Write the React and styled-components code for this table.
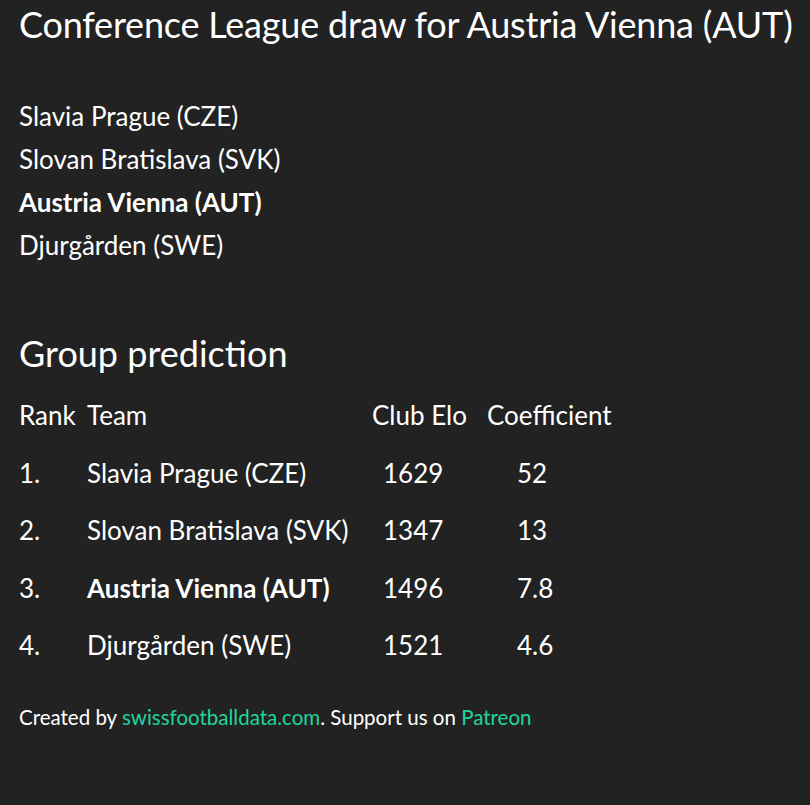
import styled, { createGlobalStyle } from 'styled-components';

const GlobalStyle = createGlobalStyle`
  html, body {
    margin: 0;
    padding: 0;
    background: #222222;
  }
  body {
    font-family: Lato, "Open Sans", sans-serif;
    color: #ffffff;
  }
`;

const Page = styled.div`
  min-height: 805px;
  padding: 2px 19px 0;
  box-sizing: border-box;
`;

const Title = styled.h1`
  margin: 0;
  font-size: 36px;
  font-weight: 400;
  line-height: 44px;
  letter-spacing: -0.2px;
  white-space: nowrap;
`;

const DrawList = styled.ul`
  list-style: none;
  margin: 49px 0 0;
  padding: 0;
`;

const DrawItem = styled.li`
  font-size: 26px;
  line-height: 43px;
  font-weight: ${props => (props.highlight ? 700 : 400)};
`;

const SubTitle = styled.h2`
  margin: 64px 0 0;
  font-size: 36px;
  font-weight: 400;
  line-height: 44px;
`;

const Table = styled.div`
  display: grid;
  grid-template-columns: 68px 285px 115px auto;
  grid-template-rows: 58px;
  grid-auto-rows: 57.5px;
  margin-top: 11px;
  font-size: 26px;
`;

const Cell = styled.div`
  display: flex;
  align-items: center;
  padding-left: ${props => props.indent || 0}px;
  font-weight: ${props => (props.highlight ? 700 : 400)};
`;

const Footer = styled.p`
  margin: 31px 0 0;
  font-size: 20.5px;
  line-height: 24px;
`;

const Link = styled.a`
  color: #1fd59d;
  text-decoration: none;
`;

const teams = [
  { name: 'Slavia Prague (CZE)', elo: 1629, coef: '52' },
  { name: 'Slovan Bratislava (SVK)', elo: 1347, coef: '13' },
  { name: 'Austria Vienna (AUT)', elo: 1496, coef: '7.8', own: true },
  { name: 'Djurgården (SWE)', elo: 1521, coef: '4.6' },
];

export default function App() {
  return (
    <>
      <GlobalStyle />
      <Page>
        <Title>Conference League draw for Austria Vienna (AUT)</Title>
        <DrawList>
          {teams.map(t => (
            <DrawItem key={t.name} highlight={t.own}>{t.name}</DrawItem>
          ))}
        </DrawList>
        <SubTitle>Group prediction</SubTitle>
        <Table>
          <Cell>Rank</Cell>
          <Cell>Team</Cell>
          <Cell>Club Elo</Cell>
          <Cell>Coefficient</Cell>
          {teams.map((t, i) => [
            <Cell key={t.name + 'r'}>{i + 1}.</Cell>,
            <Cell key={t.name + 'n'} highlight={t.own}>{t.name}</Cell>,
            <Cell key={t.name + 'e'} indent={11}>{t.elo}</Cell>,
            <Cell key={t.name + 'c'} indent={30}>{t.coef}</Cell>,
          ])}
        </Table>
        <Footer>
          Created by <Link href="#">swissfootballdata.com</Link>. Support us on <Link href="#">Patreon</Link>
        </Footer>
      </Page>
    </>
  );
}
